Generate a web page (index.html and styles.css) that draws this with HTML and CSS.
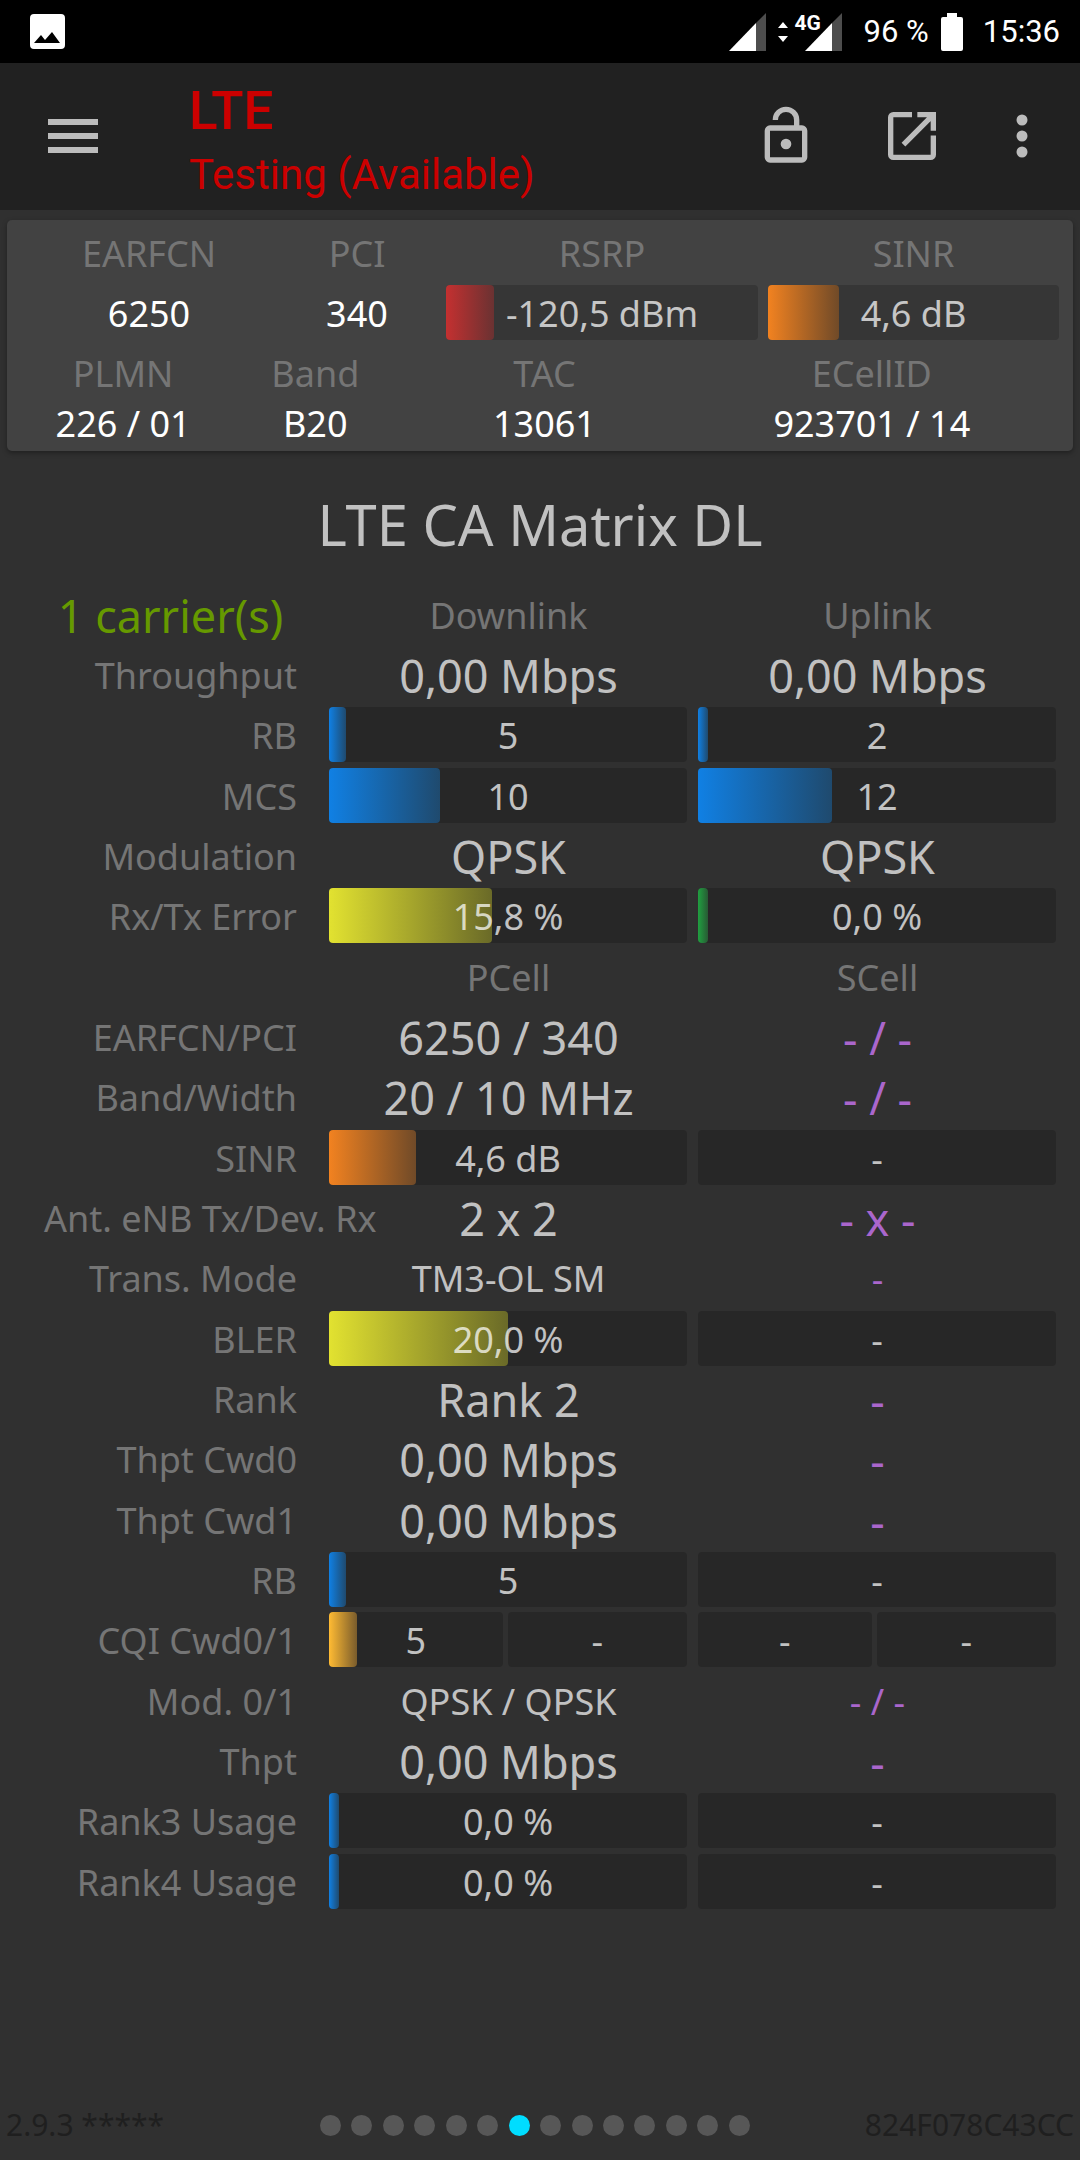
FILE: index.html
```html
<!DOCTYPE html>
<html lang="en">
<head>
<meta charset="utf-8">
<meta name="viewport" content="width=device-width, initial-scale=1">
<title>LTE CA Matrix DL</title>
<link rel="stylesheet" href="styles.css">
</head>
<body>
<div class="statusbar">
  <svg class="status-picture" viewBox="0 0 35 35" aria-hidden="true"><path fill="#fff" fill-rule="evenodd" d="M4 0h27a4 4 0 0 1 4 4v27a4 4 0 0 1-4 4H4a4 4 0 0 1-4-4V4a4 4 0 0 1 4-4zM4 29h26l-8-11-7 8-4-5z"/></svg>
  <div class="status-right">
    <svg class="signal" viewBox="0 0 37 38" aria-hidden="true"><path fill="#4d4d4d" d="M37 0v38H27V10z"/><path fill="#fff" d="M27 10v28H0z"/></svg>
    <svg class="data-arrows" viewBox="0 0 10 20" aria-hidden="true"><path fill="#fff" d="M5 0l5 6H0zM5 20l5-6H0z"/></svg>
    <div class="mobile">
      <svg class="signal" viewBox="0 0 37 38" aria-hidden="true"><path fill="#4d4d4d" d="M37 0v38H27V10z"/><path fill="#fff" d="M27 10v28H0z"/></svg>
      <span class="mobile-type">4G</span>
    </div>
    <span class="battery-level">96 %</span>
    <svg class="battery" viewBox="0 0 22 38" aria-hidden="true"><path fill="#fff" d="M6 0h10v4h4a2 2 0 0 1 2 2v30a2 2 0 0 1-2 2H2a2 2 0 0 1-2-2V6a2 2 0 0 1 2-2h4z"/></svg>
    <span class="clock">15:36</span>
  </div>
</div>

<header class="toolbar">
  <button class="icon-button" type="button" aria-label="Menu"><svg viewBox="0 0 50 34" width="50" height="34"><path d="M0 0h50v6H0zM0 14h50v6H0zM0 28h50v6H0z"/></svg></button>
  <div class="network">
    <div class="network-type">LTE</div>
    <div class="network-name">Testing (Available)</div>
  </div>
  <div class="actions">
    <button class="icon-button" type="button" aria-label="Unlock"><svg viewBox="0 0 24 24" width="64" height="64"><path d="M12 17a2 2 0 1 1 0-4 2 2 0 0 1 0 4M18 20V10H6v10zM18 8a2 2 0 0 1 2 2v10a2 2 0 0 1-2 2H6a2 2 0 0 1-2-2V10a2 2 0 0 1 2-2h9V6a3 3 0 0 0-6 0H7a5 5 0 0 1 10 0v2z"/></svg></button>
    <button class="icon-button" type="button" aria-label="Open"><svg class="outline" viewBox="0 0 24 24" width="64" height="64"><path d="M12 4H5a1 1 0 0 0-1 1v14a1 1 0 0 0 1 1h14a1 1 0 0 0 1-1v-7.200M14 4h6v6M20 4L8.800 15.200"/></svg></button>
    <button class="icon-button" type="button" aria-label="More options"><svg viewBox="0 0 12 44" width="12" height="44"><circle cx="6" cy="6" r="5.500"/><circle cx="6" cy="22" r="5.500"/><circle cx="6" cy="38" r="5.500"/></svg></button>
  </div>
</header>

<main>
  <section class="card">
    <dl class="cell-row cell-row-radio">
      <div><dt>EARFCN</dt><dd>6250</dd></div>
      <div><dt>PCI</dt><dd>340</dd></div>
      <div><dt>RSRP</dt><dd class="bar"><span class="fill red" style="width:15.4%"></span><span class="reading">-120,5 dBm</span></dd></div>
      <div><dt>SINR</dt><dd class="bar"><span class="fill orange" style="width:24.4%"></span><span class="reading">4,6 dB</span></dd></div>
    </dl>
    <dl class="cell-row cell-row-id">
      <div><dt>PLMN</dt><dd>226 / 01</dd></div>
      <div><dt>Band</dt><dd>B20</dd></div>
      <div><dt>TAC</dt><dd>13061</dd></div>
      <div><dt>ECellID</dt><dd>923701 / 14</dd></div>
    </dl>
  </section>

  <h1>LTE CA Matrix DL</h1>

  <table class="matrix">
    <colgroup><col class="col-label"><col><col></colgroup>
    <tbody>
    <tr><td class="carriers">1 carrier(s)</td><th scope="col">Downlink</th><th scope="col">Uplink</th></tr>
    <tr><th scope="row">Throughput</th><td>0,00 Mbps</td><td>0,00 Mbps</td></tr>
    <tr><th scope="row">RB</th><td><div class="bar"><span class="fill blue" style="width:4.8%"></span><span class="reading">5</span></div></td><td><div class="bar"><span class="fill blue" style="width:2.8%"></span><span class="reading">2</span></div></td></tr>
    <tr><th scope="row">MCS</th><td><div class="bar"><span class="fill blue" style="width:31%"></span><span class="reading">10</span></div></td><td><div class="bar"><span class="fill blue" style="width:37.4%"></span><span class="reading">12</span></div></td></tr>
    <tr><th scope="row">Modulation</th><td>QPSK</td><td>QPSK</td></tr>
    <tr><th scope="row">Rx/Tx Error</th><td><div class="bar"><span class="fill yellow" style="width:45.4%"></span><span class="reading">15,8 %</span></div></td><td><div class="bar"><span class="fill green" style="width:2.8%"></span><span class="reading">0,0 %</span></div></td></tr>
    <tr><td></td><th scope="col">PCell</th><th scope="col">SCell</th></tr>
    <tr><th scope="row">EARFCN/PCI</th><td>6250 / 340</td><td class="none">- / -</td></tr>
    <tr><th scope="row">Band/Width</th><td>20 / 10 MHz</td><td class="none">- / -</td></tr>
    <tr><th scope="row">SINR</th><td><div class="bar"><span class="fill orange" style="width:24.2%"></span><span class="reading">4,6 dB</span></div></td><td><div class="bar"><span class="reading">-</span></div></td></tr>
    <tr><th scope="row">Ant. eNB Tx/Dev. Rx</th><td>2 x 2</td><td class="none">- x -</td></tr>
    <tr><th scope="row">Trans. Mode</th><td class="small">TM3-OL SM</td><td class="none small">-</td></tr>
    <tr><th scope="row">BLER</th><td><div class="bar"><span class="fill yellow" style="width:50%"></span><span class="reading">20,0 %</span></div></td><td><div class="bar"><span class="reading">-</span></div></td></tr>
    <tr><th scope="row">Rank</th><td>Rank 2</td><td class="none">-</td></tr>
    <tr><th scope="row">Thpt Cwd0</th><td>0,00 Mbps</td><td class="none">-</td></tr>
    <tr><th scope="row">Thpt Cwd1</th><td>0,00 Mbps</td><td class="none">-</td></tr>
    <tr><th scope="row">RB</th><td><div class="bar"><span class="fill blue" style="width:4.8%"></span><span class="reading">5</span></div></td><td><div class="bar"><span class="reading">-</span></div></td></tr>
    <tr><th scope="row">CQI Cwd0/1</th><td><div class="bar-pair"><div class="bar"><span class="fill amber" style="width:16%"></span><span class="reading">5</span></div><div class="bar"><span class="reading">-</span></div></div></td><td><div class="bar-pair"><div class="bar"><span class="reading">-</span></div><div class="bar"><span class="reading">-</span></div></div></td></tr>
    <tr><th scope="row">Mod. 0/1</th><td class="small">QPSK / QPSK</td><td class="none small">- / -</td></tr>
    <tr><th scope="row">Thpt</th><td>0,00 Mbps</td><td class="none">-</td></tr>
    <tr><th scope="row">Rank3 Usage</th><td><div class="bar"><span class="fill blue" style="width:2.8%"></span><span class="reading">0,0 %</span></div></td><td><div class="bar"><span class="reading">-</span></div></td></tr>
    <tr><th scope="row">Rank4 Usage</th><td><div class="bar"><span class="fill blue" style="width:2.8%"></span><span class="reading">0,0 %</span></div></td><td><div class="bar"><span class="reading">-</span></div></td></tr>
    </tbody>
  </table>
</main>

<footer class="footer">
  <span>2.9.3 *****</span>
  <div class="pager"><i></i><i></i><i></i><i></i><i></i><i></i><i class="current"></i><i></i><i></i><i></i><i></i><i></i><i></i><i></i></div>
  <span class="device-id">824F078C43CC</span>
</footer>
</body>
</html>
```
FILE: styles.css
```css
* { box-sizing: border-box; }

body {
  margin: 0;
  min-height: 100vh;
  display: flex;
  flex-direction: column;
  background: #303030;
  color: #c1c1c1;
  font-family: "Noto Sans", "Open Sans", sans-serif;
  font-size: 36px;
}

/* System status bar */
.statusbar {
  height: 63px;
  padding: 0 20px 0 30px;
  display: flex;
  align-items: center;
  justify-content: space-between;
  background: #000;
  color: #fff;
  font: 31px/36px Roboto, sans-serif;
}
.status-picture { width: 35px; height: 35px; }
.status-right { display: flex; align-items: center; }
.signal { display: block; width: 37px; height: 38px; }
.data-arrows { width: 10px; height: 20px; margin: 0 17px 0 12px; }
.mobile { position: relative; }
.mobile-type {
  position: absolute;
  left: -10px;
  top: 0;
  font-size: 21px;
  line-height: 20px;
  font-weight: 700;
}
.battery-level { margin: 0 12px 0 22px; }
.battery { width: 22px; height: 38px; }
.clock { margin-left: 20px; }

/* App toolbar */
.toolbar {
  height: 147px;
  padding: 0 52px 2px 48px;
  display: flex;
  align-items: center;
  background: #212121;
}
.icon-button {
  padding: 0;
  border: 0;
  background: none;
  color: #bcbcbc;
}
.icon-button svg { display: block; fill: currentColor; }
.icon-button svg.outline { fill: none; stroke: currentColor; stroke-width: 2; }
.network {
  flex: 1;
  margin-left: 91px;
  padding-top: 10px;
  color: #c00;
  font-family: Roboto, sans-serif;
  white-space: nowrap;
}
.network-type { font-size: 53px; line-height: 68px; font-weight: 500; }
.network-name { font-size: 42px; line-height: 60px; }
.actions { display: flex; align-items: center; gap: 62px; }
.actions .icon-button:last-child { margin-left: 10px; }

/* Serving cell summary */
.card {
  margin: 10px 7px 0;
  padding: 7px 9px 2px 18px;
  border-radius: 5px;
  background: #424242;
  box-shadow: 0 2px 5px rgba(0, 0, 0, .35);
}
.cell-row { display: grid; margin: 0; text-align: center; white-space: nowrap; }
.cell-row-radio { grid-template-columns: 248fr 168fr 322fr 301fr; }
.cell-row-id { grid-template-columns: 196fr 188fr 270fr 384fr; margin-top: 9px; }
.cell-row dt { color: #757575; line-height: 50px; }
.cell-row dd { margin: 0; color: #fff; line-height: 50px; }
.cell-row-radio dt { line-height: 54px; }
.cell-row-radio dd { margin: 4px 5px 0; height: 55px; line-height: 57px; }

/* Level bars */
.bar {
  position: relative;
  height: 55px;
  line-height: 57px;
  border-radius: 4px;
  background: rgba(0, 0, 0, .18);
  font-size: 36px;
}
.fill { position: absolute; left: 0; top: 0; bottom: 0; border-radius: 4px; }
.reading { position: relative; color: rgba(255, 255, 255, .72); }
.blue { background: linear-gradient(90deg, #1080e4, #1f4a6e); }
.orange { background: linear-gradient(90deg, #f28220, #704a28); }
.yellow { background: linear-gradient(90deg, #e2e230, #6a6a28); }
.red { background: linear-gradient(90deg, #c43030, #6a3232); }
.green { background: linear-gradient(90deg, #20a040, #285a34); }
.amber { background: linear-gradient(90deg, #ffbb33, #7a5c2c); }
.bar-pair { display: flex; gap: 5px; }
.bar-pair .bar { flex: 29; }
.bar-pair .bar + .bar { flex: 30; }

/* Carrier matrix */
h1 {
  margin: 23px 0 10px;
  font-size: 56px;
  line-height: 100px;
  font-weight: 400;
  text-align: center;
}
.matrix {
  width: calc(100% - 18px);
  table-layout: fixed;
  border-collapse: collapse;
  text-align: center;
  white-space: nowrap;
}
.col-label { width: 324px; }
.matrix tr { height: 60px; }
.matrix tr:nth-child(3n) { height: 61px; }
.matrix td, .matrix th { padding: 2px 5px 0; line-height: 55px; }
.matrix td:has(.bar) { padding: 0 6px 0 5px; }
.matrix td { font-size: 45px; }
.matrix th { color: #757575; font-size: 36px; font-weight: 400; }
.matrix th[scope="row"] { padding: 2px 27px 0 44px; text-align: right; }
.matrix .carriers { padding: 2px 27px 0 44px; color: #690; }
.matrix .none { color: #a6c; }
.matrix .small { font-size: 36px; }

/* Version and page indicator */
.footer {
  margin-top: auto;
  padding: 0 6px 15px;
  display: grid;
  grid-template-columns: 31fr 430px 32fr;
  align-items: center;
  color: #1f1f1f;
  font-size: 30px;
  line-height: 40px;
}
.pager { display: flex; justify-content: space-between; }
.pager i { width: 21px; height: 21px; border-radius: 50%; background: #575757; }
.pager .current { background: #0df; }
.device-id { text-align: right; }
```
